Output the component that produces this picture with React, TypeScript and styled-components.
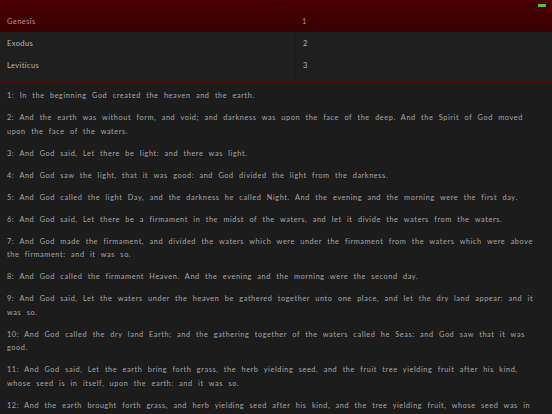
import React from "react";
import styled, { createGlobalStyle } from "styled-components";

const Global = createGlobalStyle`
  html, body { margin: 0; padding: 0; background: #1c1c1c; }
  body { width: 552px; height: 414px; overflow: hidden; font-family: Lato, "Open Sans", sans-serif; }
`;

const Page = styled.div`
  width: 552px;
  height: 414px;
  display: flex;
  flex-direction: column;
  background: #1c1c1c;
  overflow: hidden;
`;

const StatusBar = styled.div`
  height: 10px;
  flex-shrink: 0;
  background: #4a0002;
  display: flex;
  align-items: center;
  justify-content: space-between;
  padding: 0 5px;
  font-size: 5px;
  color: #2a0000;
  position: relative;
`;

const Clock = styled.span`
  position: absolute;
  left: 50%;
  transform: translateX(-50%);
`;

const Battery = styled.span`
  display: flex;
  align-items: center;
  gap: 2px;
`;

const BatteryBody = styled.span`
  width: 8px;
  height: 3px;
  background: #5fbf3a;
  border: 1px solid #300000;
`;

const Picker = styled.div`
  display: grid;
  flex-shrink: 0;
  grid-template-columns: 295px 1fr;
  background: #1f1f1f;
  border-bottom: 1px solid #4a0a0a;
`;

const Column = styled.div<{ $divider?: boolean }>`
  display: flex;
  flex-direction: column;
  border-left: ${(p) => (p.$divider ? "1px solid #3a0c0c" : "none")};
`;

const Row = styled.div<{ $selected?: boolean; $overlap?: boolean }>`
  height: 22px;
  display: flex;
  align-items: center;
  padding-left: 7px;
  font-size: 7.5px;
  letter-spacing: 0.4px;
  color: ${(p) => (p.$selected ? "#c48a8a" : "#b8b8b8")};
  background: ${(p) => (p.$selected ? "linear-gradient(#440000, #3a0000)" : "transparent")};
  margin-left: ${(p) => (p.$selected && p.$overlap ? "-1px" : "0")};
`;

const Spacer = styled.div`
  height: 6px;
`;

const Verses = styled.div`
  padding: 6px 18px 0 7px;
  display: flex;
  flex-direction: column;
  gap: 8.5px;
`;

const Verse = styled.p`
  margin: 0;
  font-size: 7.3px;
  line-height: 13.5px;
  letter-spacing: 0.6px;
  word-spacing: 2.9px;
  color: #a6a6a6;
`;

const books = ["Genesis", "Exodus", "Leviticus"];
const chapters = ["1", "2", "3"];

const verses = [
  "In the beginning God created the heaven and the earth.",
  "And the earth was without form, and void; and darkness was upon the face of the deep. And the Spirit of God moved upon the face of the waters.",
  "And God said, Let there be light: and there was light.",
  "And God saw the light, that it was good: and God divided the light from the darkness.",
  "And God called the light Day, and the darkness he called Night. And the evening and the morning were the first day.",
  "And God said, Let there be a firmament in the midst of the waters, and let it divide the waters from the waters.",
  "And God made the firmament, and divided the waters which were under the firmament from the waters which were above the firmament: and it was so.",
  "And God called the firmament Heaven. And the evening and the morning were the second day.",
  "And God said, Let the waters under the heaven be gathered together unto one place, and let the dry land appear: and it was so.",
  "And God called the dry land Earth; and the gathering together of the waters called he Seas: and God saw that it was good.",
  "And God said, Let the earth bring forth grass, the herb yielding seed, and the fruit tree yielding fruit after his kind, whose seed is in itself, upon the earth: and it was so.",
  "And the earth brought forth grass, and herb yielding seed after his kind, and the tree yielding fruit, whose seed was in itself, after his kind: and God saw that it was good.",
];

export default function App() {
  return (
    <Page>
      <Global />
      <StatusBar>
        <span>iPad ✈</span>
        <Clock>3:20 PM</Clock>
        <Battery>
          <span>100%</span>
          <BatteryBody />
        </Battery>
      </StatusBar>
      <Picker>
        <Column>
          {books.map((b, i) => (
            <Row key={b} $selected={i === 0}>
              {b}
            </Row>
          ))}
          <Spacer />
        </Column>
        <Column $divider>
          {chapters.map((c, i) => (
            <Row key={c} $selected={i === 0} $overlap>
              {c}
            </Row>
          ))}
          <Spacer />
        </Column>
      </Picker>
      <Verses>
        {verses.map((v, i) => (
          <Verse key={i}>
            {i + 1}: {v}
          </Verse>
        ))}
      </Verses>
    </Page>
  );
}
